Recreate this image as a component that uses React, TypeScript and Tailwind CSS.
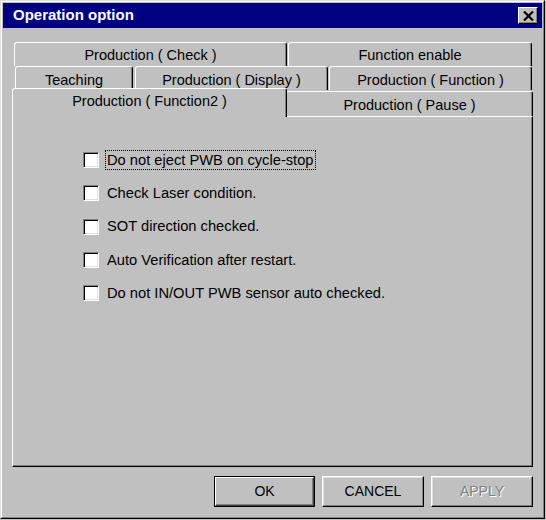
import React from "react";

const raised =
  "border-t border-l border-t-white border-l-white border-r border-r-black shadow-[inset_-1px_0_0_#808080]";

function Tab({
  label,
  width,
  className = "",
}: {
  label: string;
  width: string;
  className?: string;
}) {
  return (
    <div
      className={`${width} ${raised} flex shrink-0 items-center justify-center rounded-t-[3px] bg-[#c0c0c0] ${className}`}
    >
      {label}
    </div>
  );
}

function CheckRow({ label, focused }: { label: string; focused?: boolean }) {
  return (
    <div className="flex h-[20px] items-center">
      <div className="h-[16px] w-[16px] shrink-0 border border-t-[#808080] border-l-[#808080] border-r-white border-b-white bg-white shadow-[inset_1px_1px_0_#000,inset_-1px_-1px_0_#dfdfdf]" />
      <span
        className={`ml-[6px] flex h-[20px] items-center border px-[1px] text-[14.7px] leading-none ${
          focused ? "border-dotted border-black" : "border-transparent"
        }`}
      >
        {label}
      </span>
    </div>
  );
}

function Button({
  label,
  isDefault,
  disabled,
}: {
  label: string;
  isDefault?: boolean;
  disabled?: boolean;
}) {
  if (isDefault) {
    return (
      <div className="h-[31px] w-[101px] border border-black">
        <div className="flex h-full w-full items-center justify-center border border-t-white border-l-white border-r-[#404040] border-b-[#404040] shadow-[inset_-1px_-1px_0_#808080]">
          {label}
        </div>
      </div>
    );
  }
  return (
    <div className="flex h-[31px] w-[102px] items-center justify-center border border-t-white border-l-white border-r-black border-b-black shadow-[inset_-1px_-1px_0_#808080,inset_1px_1px_0_#dfdfdf]">
      <span
        className={
          disabled ? "text-[#808080] [text-shadow:1px_1px_0_#fff]" : ""
        }
      >
        {label}
      </span>
    </div>
  );
}

export default function App() {
  return (
    <div
      className="h-[520px] w-[546px] bg-[#c0c0c0] text-[14.5px] text-black"
      style={{ fontFamily: '"Liberation Sans", Arial, sans-serif' }}
    >
      <div className="h-[519px] w-[545px] border border-t-[#dfdfdf] border-l-[#dfdfdf] border-r-black border-b-black">
        <div className="h-full w-full border border-t-white border-l-white border-r-[#808080] border-b-[#808080] p-[1px]">
          {/* title bar */}
          <div className="flex h-[25px] items-center justify-between bg-[#000080] pl-[10px] pr-[4px]">
            <span className="text-[15px] font-bold text-white">
              Operation option
            </span>
            <div className="flex h-[17px] w-[20px] items-center justify-center border border-t-white border-l-white border-r-black border-b-black bg-[#c0c0c0] shadow-[inset_-1px_-1px_0_#808080]">
              <svg width="11" height="10" viewBox="0 0 11 10">
                <path
                  d="M1 0.5 L10 9.5 M10 0.5 L1 9.5"
                  stroke="#000"
                  strokeWidth="2.2"
                />
              </svg>
            </div>
          </div>

          {/* tab control */}
          <div className="ml-[9px] mt-[14px] w-[521px]">
            <div className="flex h-[24px] gap-[1px] pl-[2px]">
              <Tab label="Production ( Check )" width="w-[273px]" className="pt-[3px]" />
              <Tab label="Function enable" width="w-[244px]" className="pt-[3px]" />
            </div>
            <div className="flex h-[24px] pl-[3px]">
              <Tab label="Teaching" width="w-[118px]" className="pt-[5px]" />
              <Tab label="Production ( Display )" width="w-[193px] ml-[2px]" className="pt-[5px]" />
              <Tab label="Production ( Function )" width="w-[203px] ml-[1px]" className="pt-[5px]" />
            </div>
            <div className="flex h-[26px] items-end">
              <div className="relative z-10 -mb-[1px] flex h-[29px] w-[275px] shrink-0 items-center justify-center rounded-t-[3px] border-t border-l border-r border-t-white border-l-white border-r-black bg-[#c0c0c0] pb-[2px] shadow-[inset_-1px_0_0_#808080]">
                Production ( Function2 )
              </div>
              <div className="flex h-[25px] w-[246px] shrink-0 items-center justify-center rounded-tr-[3px] border-t border-r border-t-white border-r-black bg-[#c0c0c0] pt-[3px] shadow-[inset_-1px_0_0_#808080]">
                Production ( Pause )
              </div>
            </div>
            <div className="h-[351px] border border-t-white border-l-white border-r-black border-b-black shadow-[inset_-1px_-1px_0_#808080]">
              <div className="ml-[70px] mt-[33px] flex flex-col gap-[13.3px]">
                <CheckRow label="Do not eject PWB on cycle-stop" focused />
                <CheckRow label="Check Laser condition." />
                <CheckRow label="SOT direction checked." />
                <CheckRow label="Auto Verification after restart." />
                <CheckRow label="Do not IN/OUT PWB sensor auto checked." />
              </div>
            </div>
            <div className="mt-[9px] flex justify-end gap-[7px] text-[14px]">
              <Button label="OK" isDefault />
              <Button label="CANCEL" />
              <Button label="APPLY" disabled />
            </div>
          </div>
        </div>
      </div>
    </div>
  );
}
